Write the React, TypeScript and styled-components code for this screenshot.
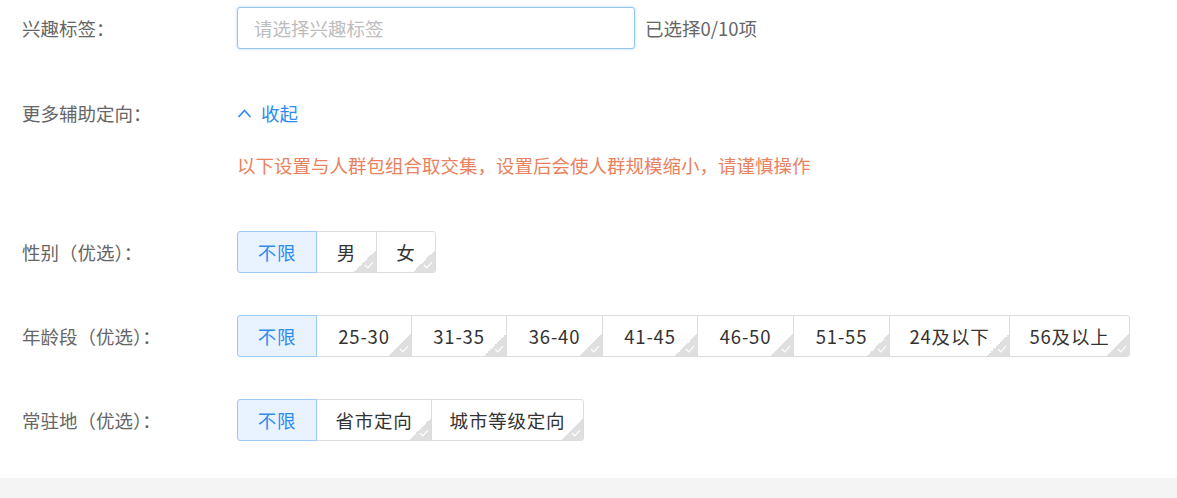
import React from "react";
import styled, { createGlobalStyle, css } from "styled-components";

const Global = createGlobalStyle`
  html, body { margin: 0; padding: 0; background: #fff; }
  body {
    font-family: "PingFang SC", "Noto Sans CJK SC", "Noto Sans", sans-serif;
    font-size: 18.5px;
    color: #333;
  }
`;

const Page = styled.div`
  width: 1177px;
  height: 498px;
  display: flex;
  flex-direction: column;
  overflow: hidden;
`;

const Form = styled.div`
  flex: 1;
  display: flex;
  flex-direction: column;
  padding: 7px 0 0 22px;
  background: #fff;
`;

const Footer = styled.div`
  height: 20px;
  background: #f4f4f4;
`;

const Item = styled.div<{ $mb?: number }>`
  display: flex;
  align-items: center;
  height: 42px;
  margin-bottom: ${(p) => (p.$mb ?? 42)}px;
`;

const Label = styled.div`
  width: 215px;
  flex-shrink: 0;
  color: #666;
  font-size: 18.5px;
  line-height: 24px;
`;

const Input = styled.input`
  box-sizing: border-box;
  width: 398px;
  height: 42px;
  padding: 0 16px;
  border: 1px solid #93c6f3;
  border-radius: 3px;
  box-shadow: 0 0 3px rgba(45, 140, 240, 0.35);
  font-family: inherit;
  font-size: 18.5px;
  color: #333;
  outline: none;
  &::placeholder { color: #bdbdbd; }
`;

const Count = styled.span`
  margin-left: 10px;
  color: #666;
  font-size: 18.5px;
`;

const Toggle = styled.button`
  display: flex;
  align-items: center;
  gap: 9px;
  padding: 0;
  border: none;
  background: none;
  color: #2d8cf0;
  font-family: inherit;
  font-size: 18.5px;
  cursor: pointer;
`;

const Warning = styled.div`
  margin-left: 215px;
  height: 22px;
  line-height: 22px;
  color: #e9825e;
  font-size: 18.5px;
  margin-top: 20px;
  margin-bottom: 55px;
`;

const Group = styled.div`
  display: flex;
`;

const Option = styled.button<{ $w: number; $active?: boolean }>`
  position: relative;
  box-sizing: border-box;
  width: ${(p) => p.$w}px;
  height: 42px;
  margin-left: -1px;
  padding: 0;
  border: 1px solid #dcdcdc;
  background: #fff;
  color: #333;
  font-family: inherit;
  font-size: 18.5px;
  letter-spacing: 0.8px;
  overflow: hidden;
  cursor: pointer;
  &:first-child { margin-left: 0; border-radius: 3px 0 0 3px; }
  &:last-child { border-radius: 0 3px 3px 0; }
  ${(p) =>
    p.$active &&
    css`
      z-index: 1;
      background: #e8f3ff;
      border-color: #9ccaf4;
      color: #2d8cf0;
    `}
`;

const Corner = styled.span`
  position: absolute;
  right: 0;
  bottom: 0;
  width: 22px;
  height: 22px;
  background: linear-gradient(135deg, transparent 50%, #dfdfdf 50%);
  display: flex;
  align-items: flex-end;
  justify-content: flex-end;
  svg { margin: 0 2px 3px 0; }
`;

const Check = () => (
  <svg width="10" height="8" viewBox="0 0 10 8" fill="none">
    <path d="M1 4 L3.8 6.8 L9 1.2" stroke="#fff" strokeWidth="1.2" />
  </svg>
);

const ChevronUp = () => (
  <svg width="15" height="10" viewBox="0 0 15 10" fill="none">
    <path d="M1.5 9 L7.5 2.5 L13.5 9" stroke="#2d8cf0" strokeWidth="1.7" />
  </svg>
);

type Opt = { text: string; w: number };

const Options = ({ items }: { items: Opt[] }) => (
  <Group>
    <Option $w={80} $active>
      不限
    </Option>
    {items.map((o) => (
      <Option key={o.text} $w={o.w}>
        {o.text}
        <Corner>
          <Check />
        </Corner>
      </Option>
    ))}
  </Group>
);

const gender: Opt[] = [
  { text: "男", w: 61 },
  { text: "女", w: 60 },
];

const ages: Opt[] = [
  { text: "25-30", w: 96 },
  { text: "31-35", w: 96 },
  { text: "36-40", w: 97 },
  { text: "41-45", w: 96 },
  { text: "46-50", w: 97 },
  { text: "51-55", w: 97 },
  { text: "24及以下", w: 121 },
  { text: "56及以上", w: 121 },
];

const places: Opt[] = [
  { text: "省市定向", w: 116 },
  { text: "城市等级定向", w: 153 },
];

export default function App() {
  return (
    <Page>
      <Global />
      <Form>
        <Item $mb={43}>
          <Label>兴趣标签：</Label>
          <Input placeholder="请选择兴趣标签" />
          <Count>已选择0/10项</Count>
        </Item>
        <Item $mb={0}>
          <Label>更多辅助定向：</Label>
          <Toggle>
            <ChevronUp />
            收起
          </Toggle>
        </Item>
        <Warning>以下设置与人群包组合取交集，设置后会使人群规模缩小，请谨慎操作</Warning>
        <Item $mb={42}>
          <Label>性别（优选）：</Label>
          <Options items={gender} />
        </Item>
        <Item $mb={42}>
          <Label>年龄段（优选）：</Label>
          <Options items={ages} />
        </Item>
        <Item $mb={0}>
          <Label>常驻地（优选）：</Label>
          <Options items={places} />
        </Item>
      </Form>
      <Footer />
    </Page>
  );
}
